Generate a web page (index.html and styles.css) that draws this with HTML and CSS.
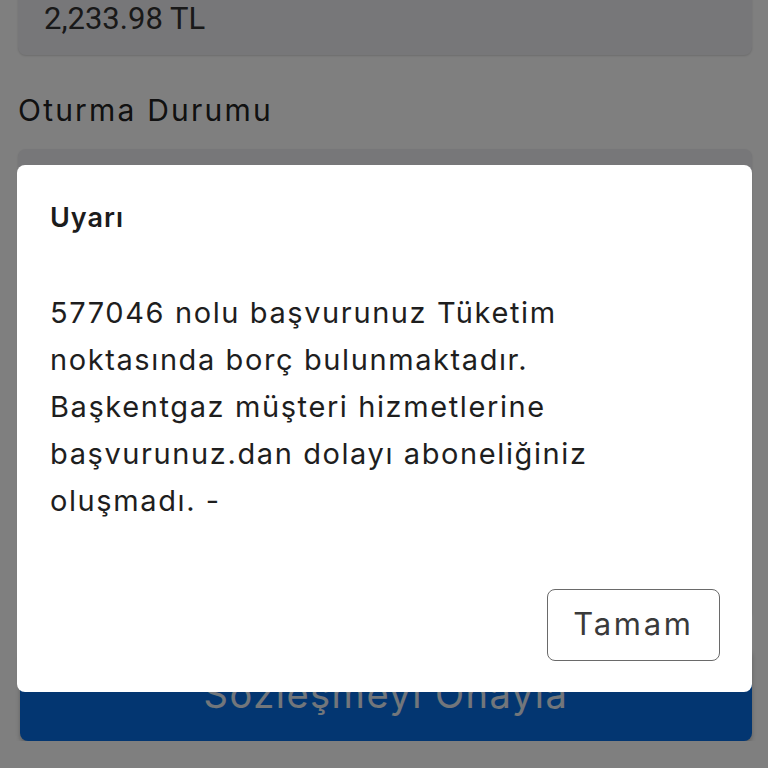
FILE: index.html
```html
<!DOCTYPE html>
<html lang="tr">
<head>
    <meta charset="UTF-8">
    <meta name="viewport" content="width=device-width, initial-scale=1.0">
    <title>Abonelik</title>
    <link rel="stylesheet" href="styles.css">
</head>
<body>
    <div class="form">
        <div class="field field-top">2,233.98 TL</div>
        <div class="label">Oturma Durumu</div>
        <div class="field field-select"></div>
        <div class="submit">Sözleşmeyi Onayla</div>
    </div>

    <div class="overlay">
        <div class="dialog">
            <div class="dialog-title">Uyarı</div>
            <div class="dialog-body">
                577046 nolu başvurunuz Tüketim<br>
                noktasında borç bulunmaktadır.<br>
                Başkentgaz müşteri hizmetlerine<br>
                başvurunuz.dan dolayı aboneliğiniz<br>
                oluşmadı. -
            </div>
            <div class="dialog-actions">
                <div class="btn-ok">Tamam</div>
            </div>
        </div>
    </div>
</body>
</html>
```

FILE: styles.css
```css
body {
    margin: 0;
    background-color: #fefefe;
    font-family: Inter, "Noto Sans", sans-serif;
    color: #222;
    overflow: hidden;
}

.form {
    padding: 0 16px 0 18px;
}

.field {
    background-color: #eeeef2;
    border-radius: 8px;
    box-shadow: 0 1px 2px rgba(0, 0, 0, 0.15);
}

.field-top {
    margin-top: -15px;
    height: 70px;
    line-height: 68px;
    padding-left: 26px;
    font-family: Roboto, sans-serif;
    font-size: 31px;
    color: #333;
}

.label {
    margin-top: 38px;
    font-size: 30px;
    letter-spacing: 2.2px;
    line-height: 34px;
}

.field-select {
    margin-top: 22px;
    height: 470px;
}

.submit {
    margin-top: 28px;
    margin-left: 2px;
    height: 94px;
    line-height: 94px;
    border-radius: 8px;
    background-color: #066ce2;
    color: #e4ecf6;
    text-align: center;
    font-size: 38px;
    letter-spacing: 1.5px;
    box-shadow: 0 3px 4px rgba(0, 0, 0, 0.25);
}

.overlay {
    position: fixed;
    inset: 0;
    background-color: rgba(0, 0, 0, 0.5);
}

.dialog {
    position: absolute;
    left: 17px;
    top: 165px;
    width: 735px;
    height: 527px;
    box-sizing: border-box;
    padding: 34px 33px 32px 33px;
    background-color: #fff;
    border-radius: 8px;
    display: flex;
    flex-direction: column;
}

.dialog-title {
    font-size: 27px;
    font-weight: 600;
    letter-spacing: 1px;
    line-height: 38px;
    color: #1c1c1c;
}

.dialog-body {
    margin-top: 52px;
    font-size: 29px;
    letter-spacing: 1.6px;
    line-height: 47px;
    color: #1e1e1e;
}

.dialog-actions {
    margin-top: auto;
    display: flex;
    justify-content: flex-end;
}

.btn-ok {
    width: 173px;
    height: 72px;
    box-sizing: border-box;
    margin-right: -1px;
    margin-bottom: -1px;
    padding-bottom: 4px;
    border: 1.5px solid #6a6a6a;
    border-radius: 8px;
    display: flex;
    align-items: center;
    justify-content: center;
    font-size: 31px;
    letter-spacing: 2.7px;
    color: #3a3a3a;
}
```
